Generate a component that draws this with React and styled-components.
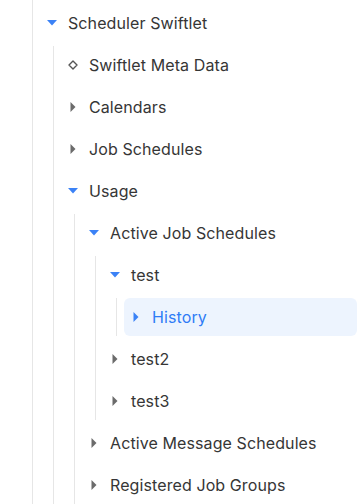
import React from "react";
import styled, { createGlobalStyle } from "styled-components";

const Global = createGlobalStyle`
  html, body { margin: 0; padding: 0; background: #ffffff; }
  body { font-family: Inter, "Noto Sans", sans-serif; overflow: hidden; }
`;

const Page = styled.div`
  width: 357px;
  height: 504px;
  overflow: hidden;
  padding-left: 32px;
  box-sizing: border-box;
`;

const Group = styled.ul`
  list-style: none;
  margin: 0;
  margin-left: ${(p) => (p.$root ? 0 : 13)}px;
  padding: ${(p) => (p.$root ? "4px 0 0 7px" : "0 0 0 7px")};
  border-left: 1px solid #e6e6e6;
  display: flex;
  flex-direction: column;
  gap: 4px;
  min-height: ${(p) => (p.$root ? "520px" : "0")};
  box-sizing: border-box;
`;

const Item = styled.li`
  display: flex;
  flex-direction: column;
  gap: 4px;
`;

const Row = styled.div`
  height: 38px;
  display: flex;
  align-items: center;
  border-radius: 6px;
  background: ${(p) => (p.$active ? "#edf4fe" : "transparent")};
  color: ${(p) => (p.$active ? "#2f7cf6" : "#363636")};
  font-size: 16px;
  letter-spacing: 0.1px;
  white-space: nowrap;
`;

const IconBox = styled.span`
  width: 24px;
  height: 24px;
  flex: none;
  display: flex;
  align-items: center;
  justify-content: center;
  margin-right: 4px;
`;

const Label = styled.span`
  line-height: 20px;
`;

function Caret({ open, color }) {
  return open ? (
    <svg width="10" height="6" viewBox="0 0 10 6">
      <path d="M0 0 L10 0 L5 5.5 Z" fill={color} />
    </svg>
  ) : (
    <svg width="6" height="10" viewBox="0 0 6 10">
      <path d="M0.5 0 L5.5 5 L0.5 10 Z" fill={color} />
    </svg>
  );
}

function Diamond() {
  return (
    <svg width="10" height="10" viewBox="0 0 10 10">
      <path d="M5 1 L9 5 L5 9 L1 5 Z" fill="none" stroke="#555" strokeWidth="1.4" strokeLinejoin="round" />
    </svg>
  );
}

const tree = [
  {
    label: "Scheduler Swiftlet",
    open: true,
    children: [
      { label: "Swiftlet Meta Data", leaf: true },
      { label: "Calendars" },
      { label: "Job Schedules" },
      {
        label: "Usage",
        open: true,
        children: [
          {
            label: "Active Job Schedules",
            open: true,
            children: [
              {
                label: "test",
                open: true,
                children: [{ label: "History", active: true }],
              },
              { label: "test2" },
              { label: "test3" },
            ],
          },
          { label: "Active Message Schedules" },
          { label: "Registered Job Groups" },
        ],
      },
    ],
  },
];

function Node({ node }) {
  const caretColor = node.open || node.active ? "#3b82f6" : "#6b6b6b";
  return (
    <Item>
      <Row $active={node.active}>
        <IconBox>
          {node.leaf ? <Diamond /> : <Caret open={node.open} color={caretColor} />}
        </IconBox>
        <Label>{node.label}</Label>
      </Row>
      {node.open && node.children && (
        <Group>
          {node.children.map((c) => (
            <Node key={c.label} node={c} />
          ))}
        </Group>
      )}
    </Item>
  );
}

export default function App() {
  return (
    <>
      <Global />
      <Page>
        <Group $root>
          {tree.map((n) => (
            <Node key={n.label} node={n} />
          ))}
        </Group>
      </Page>
    </>
  );
}
